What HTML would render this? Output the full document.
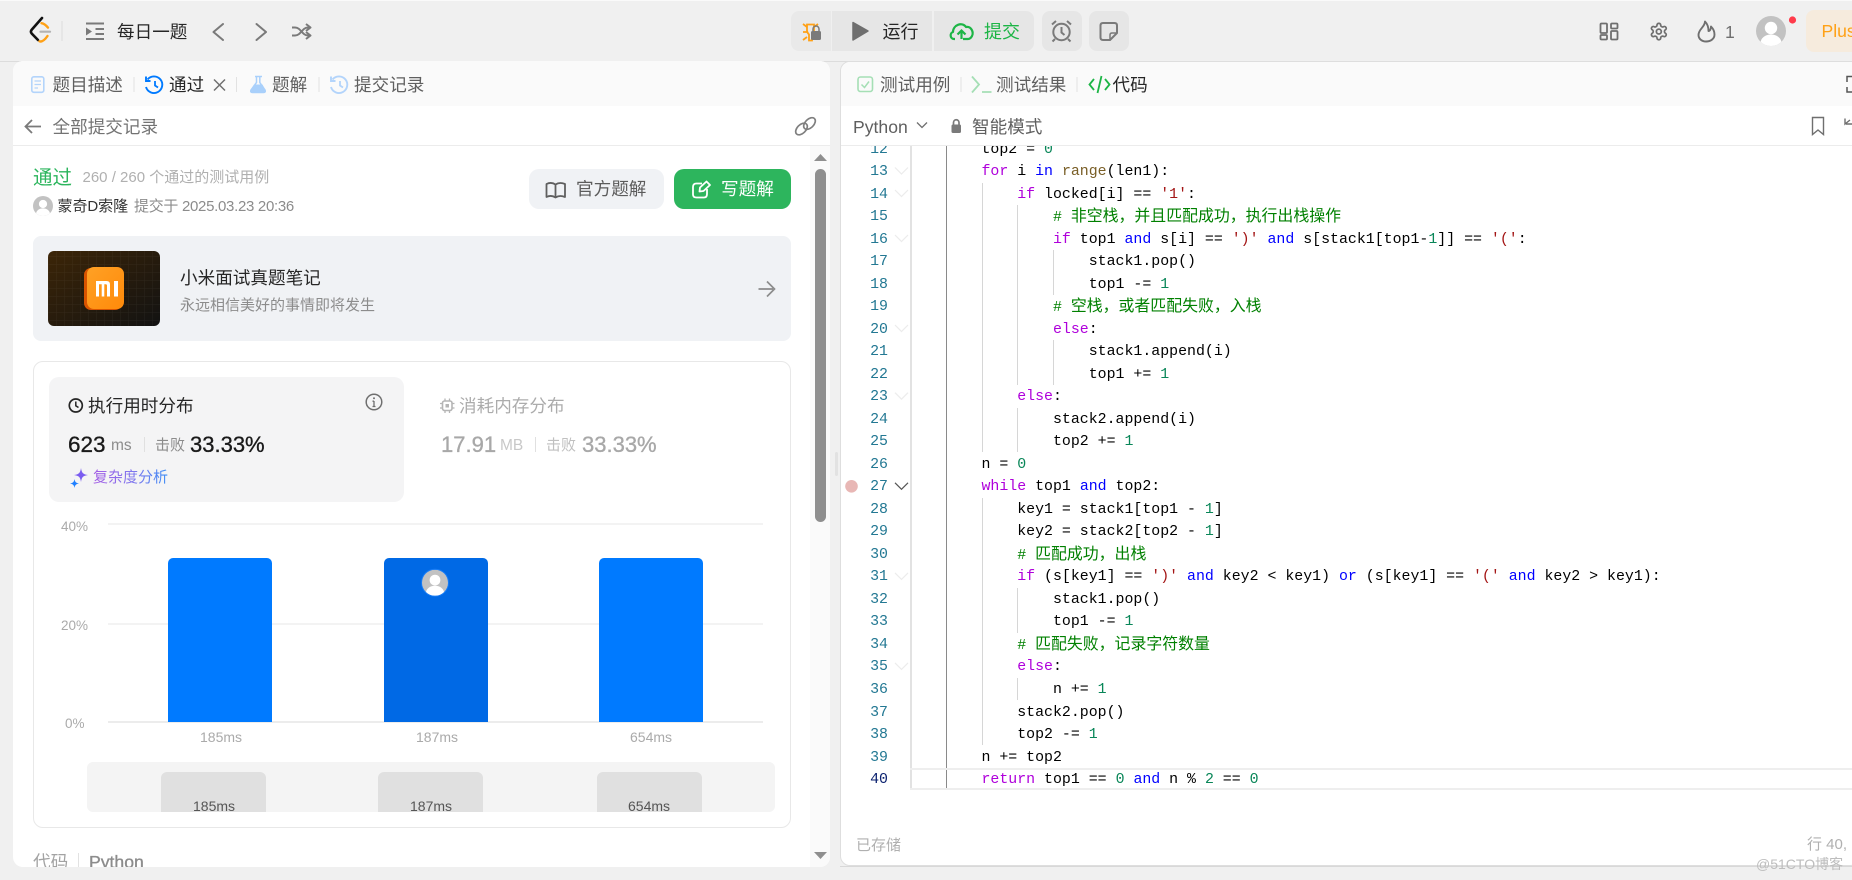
<!DOCTYPE html>
<html lang="zh"><head><meta charset="utf-8"><title>每日一题</title>
<style>
html,body{margin:0;padding:0}
body{width:1852px;height:880px;overflow:hidden;background:#f0f0f0;position:relative;font-family:"Liberation Sans","Noto Sans CJK SC",sans-serif;color:#262626}
.a{position:absolute}
.t{position:absolute;white-space:nowrap;line-height:20px;height:20px}
.g{color:#5f5f5f}
.f{font-size:17.6px}
.m{font-size:15px}
.d{position:absolute;background:#e2e2e2;width:1px}
.mono{font-family:"Liberation Mono","Noto Sans CJK SC",monospace;font-size:14.9px}
.l{height:22.52px;line-height:22.52px;white-space:pre;color:#000}
.k{color:#af00db}.b{color:#0000ff}.n{color:#098658}.s{color:#a31515}.c{color:#008000}.r{color:#795e26}
.c i{font-style:normal;font-size:15.9px}
.gu{position:absolute;width:1px;background:#d6d6d6}
.st{-webkit-text-stroke:.35px currentColor}
svg{position:absolute;left:0;top:0}
</style></head><body>
<div class="a" style="left:0;top:0;width:1852px;height:1px;background:#fafafa"></div>
<div class="a" style="left:0;top:61px;width:1852px;height:1px;background:#dcdcdc"></div>

<!-- left panel -->
<div class="a" style="left:13px;top:61px;width:817px;height:806px;background:#fff;border-radius:10px;overflow:hidden">
  <div class="a" style="left:0;top:0;width:817px;height:45px;background:#fafafa"></div>
  <div class="a" style="left:0;top:84px;width:817px;height:1px;background:#ececec"></div>
  <div class="a" style="left:797px;top:85px;width:20px;height:721px;background:#fafafa"></div>
</div>
<!-- right panel -->
<div class="a" style="left:840px;top:61px;width:1020px;height:805px;background:#fff;border:1px solid #dedede;box-sizing:border-box;border-radius:10px;overflow:hidden">
  <div class="a" style="left:0;top:0;width:1020px;height:44px;background:#fafafa"></div>
  <div class="a" style="left:0;top:83px;width:1020px;height:1px;background:#ececec"></div>
</div>
<!-- top buttons -->
<div class="a" style="left:791px;top:11px;width:40px;height:40px;background:#e9e9e9;border-radius:8px 0 0 8px"></div>
<div class="a" style="left:832px;top:11px;width:100px;height:40px;background:#e6e6e6"></div>
<div class="a" style="left:934px;top:11px;width:100px;height:40px;background:#e6e6e6;border-radius:0 8px 8px 0"></div>
<div class="a" style="left:1042px;top:11px;width:40px;height:40px;background:#e6e6e6;border-radius:8px"></div>
<div class="a" style="left:1089px;top:11px;width:40px;height:40px;background:#e6e6e6;border-radius:8px"></div>
<div class="a" style="left:1806px;top:10px;width:46px;height:42px;background:#f6ebdd;border-radius:8px 0 0 8px"></div>

<!-- left content boxes -->
<div class="a" style="left:529px;top:169px;width:135px;height:40px;background:#f0f2f5;border-radius:10px"></div>
<div class="a" style="left:674px;top:169px;width:117px;height:40px;background:#2db55d;border-radius:10px"></div>
<div class="a" style="left:33px;top:236px;width:758px;height:105px;background:#f0f2f5;border-radius:8px"></div>
<div class="a" style="left:33px;top:361px;width:758px;height:467px;box-sizing:border-box;border:1px solid #e8e8e8;border-radius:10px"></div>
<div class="a" style="left:49px;top:377px;width:355px;height:125px;background:#f4f4f5;border-radius:10px"></div>
<!-- chart -->
<div class="a" style="left:108px;top:523px;width:655px;height:2px;background:#f3f3f3"></div>
<div class="a" style="left:108px;top:623px;width:655px;height:2px;background:#f3f3f3"></div>
<div class="a" style="left:108px;top:721px;width:655px;height:2px;background:#ececec"></div>
<div class="a" style="left:168px;top:558px;width:104px;height:164px;background:#007aff;border-radius:5px 5px 0 0"></div>
<div class="a" style="left:384px;top:558px;width:104px;height:164px;background:#0069e5;border-radius:5px 5px 0 0"></div>
<div class="a" style="left:599px;top:558px;width:104px;height:164px;background:#007aff;border-radius:5px 5px 0 0"></div>
<div class="a" style="left:87px;top:762px;width:688px;height:50px;background:#f4f4f4;border-radius:6px;overflow:hidden">
  <div class="a" style="left:74px;top:10px;width:105px;height:40px;background:#e0e0e0;border-radius:6px 6px 0 0"></div>
  <div class="a" style="left:291px;top:10px;width:105px;height:40px;background:#e0e0e0;border-radius:6px 6px 0 0"></div>
  <div class="a" style="left:510px;top:10px;width:105px;height:40px;background:#e0e0e0;border-radius:6px 6px 0 0"></div>
  <div class="t" style="left:106px;top:34px;font-size:14px;color:#555">185ms</div>
  <div class="t" style="left:323px;top:34px;font-size:14px;color:#555">187ms</div>
  <div class="t" style="left:541px;top:34px;font-size:14px;color:#555">654ms</div>
</div>
<!-- scrollbar -->
<div class="a" style="left:815px;top:169px;width:11px;height:353px;background:#8f8f8f;border-radius:6px"></div>
<div class="a" style="left:835px;top:452px;width:3px;height:24px;background:#e2e2e2;border-radius:2px"></div>

<!-- code -->
<div class="a" style="left:910px;top:146px;width:2px;height:644px;background:#e2e2e2"></div>
<div class="a" style="left:946px;top:146px;width:1px;height:644px;background:#8a8a8a"></div>
<div class="a" style="left:910px;top:768px;width:942px;height:2px;background:#eee"></div>
<div class="a" style="left:910px;top:788px;width:942px;height:2px;background:#eee"></div>
<div class="gu" style="left:982px;top:183px;height:269px"></div>
<div class="gu" style="left:982px;top:498px;height:247px"></div>
<div class="gu" style="left:1017px;top:205px;height:180px"></div>
<div class="gu" style="left:1017px;top:408px;height:44px"></div>
<div class="gu" style="left:1017px;top:588px;height:45px"></div>
<div class="gu" style="left:1017px;top:678px;height:22px"></div>
<div class="gu" style="left:1053px;top:250px;height:45px"></div>
<div class="gu" style="left:1053px;top:340px;height:45px"></div>

<div class="a mono" style="left:850px;top:146px;width:38px;height:644px;overflow:hidden;text-align:right;color:#237893">
<div style="margin-top:-7.4px">
<div class="l" style="color:#237893">12</div><div class="l" style="color:#237893">13</div><div class="l" style="color:#237893">14</div><div class="l" style="color:#237893">15</div><div class="l" style="color:#237893">16</div><div class="l" style="color:#237893">17</div><div class="l" style="color:#237893">18</div><div class="l" style="color:#237893">19</div><div class="l" style="color:#237893">20</div><div class="l" style="color:#237893">21</div><div class="l" style="color:#237893">22</div><div class="l" style="color:#237893">23</div><div class="l" style="color:#237893">24</div><div class="l" style="color:#237893">25</div><div class="l" style="color:#237893">26</div><div class="l" style="color:#237893">27</div><div class="l" style="color:#237893">28</div><div class="l" style="color:#237893">29</div><div class="l" style="color:#237893">30</div><div class="l" style="color:#237893">31</div><div class="l" style="color:#237893">32</div><div class="l" style="color:#237893">33</div><div class="l" style="color:#237893">34</div><div class="l" style="color:#237893">35</div><div class="l" style="color:#237893">36</div><div class="l" style="color:#237893">37</div><div class="l" style="color:#237893">38</div><div class="l" style="color:#237893">39</div><div class="l" style="color:#0b216f">40</div>
</div></div>

<div class="a mono" style="left:910px;top:146px;width:942px;height:644px;overflow:hidden">
<div style="margin-top:-7.4px">
<div class="l">        top2 = <span class="n">0</span></div>
<div class="l">        <span class="k">for</span> i <span class="b">in</span> <span class="r">range</span>(len1):</div>
<div class="l">            <span class="k">if</span> locked[i] == <span class="s">'1'</span>:</div>
<div class="l">                <span class="c"># <i>非空栈，并且匹配成功，执行出栈操作</i></span></div>
<div class="l">                <span class="k">if</span> top1 <span class="b">and</span> s[i] == <span class="s">')'</span> <span class="b">and</span> s[stack1[top1-<span class="n">1</span>]] == <span class="s">'('</span>:</div>
<div class="l">                    stack1.pop()</div>
<div class="l">                    top1 -= <span class="n">1</span></div>
<div class="l">                <span class="c"># <i>空栈，或者匹配失败，入栈</i></span></div>
<div class="l">                <span class="k">else</span>:</div>
<div class="l">                    stack1.append(i)</div>
<div class="l">                    top1 += <span class="n">1</span></div>
<div class="l">            <span class="k">else</span>:</div>
<div class="l">                stack2.append(i)</div>
<div class="l">                top2 += <span class="n">1</span></div>
<div class="l">        n = <span class="n">0</span></div>
<div class="l">        <span class="k">while</span> top1 <span class="b">and</span> top2:</div>
<div class="l">            key1 = stack1[top1 - <span class="n">1</span>]</div>
<div class="l">            key2 = stack2[top2 - <span class="n">1</span>]</div>
<div class="l">            <span class="c"># <i>匹配成功，出栈</i></span></div>
<div class="l">            <span class="k">if</span> (s[key1] == <span class="s">')'</span> <span class="b">and</span> key2 &lt; key1) <span class="b">or</span> (s[key1] == <span class="s">'('</span> <span class="b">and</span> key2 &gt; key1):</div>
<div class="l">                stack1.pop()</div>
<div class="l">                top1 -= <span class="n">1</span></div>
<div class="l">            <span class="c"># <i>匹配失败，记录字符数量</i></span></div>
<div class="l">            <span class="k">else</span>:</div>
<div class="l">                n += <span class="n">1</span></div>
<div class="l">            stack2.pop()</div>
<div class="l">            top2 -= <span class="n">1</span></div>
<div class="l">        n += top2</div>
<div class="l">        <span class="k">return</span> top1 == <span class="n">0</span> <span class="b">and</span> n % <span class="n">2</span> == <span class="n">0</span></div>
</div></div>

<!-- icons -->
<svg width="1852" height="880" viewBox="0 0 1852 880" fill="none">
<defs>
<linearGradient id="gi" x1="0" y1="0" x2="1" y2="1"><stop offset="0" stop-color="#3c2507"/><stop offset="1" stop-color="#121212"/></linearGradient>
<linearGradient id="go" x1="0" y1="0" x2="1" y2="1"><stop offset="0" stop-color="#ffa125"/><stop offset="1" stop-color="#ff8a0a"/></linearGradient>
<pattern id="pg" width="8" height="8" patternUnits="userSpaceOnUse"><path d="M8 0H0V8" stroke="#fff" stroke-opacity=".06"/></pattern>
<clipPath id="cb"><circle cx="15" cy="15" r="15"/></clipPath>
<symbol id="av" viewBox="0 0 30 30"><g clip-path="url(#cb)"><rect width="30" height="30" fill="#c2c2c2"/><circle cx="15" cy="12" r="6.2" fill="#fff"/><ellipse cx="15" cy="27" rx="10.5" ry="8.5" fill="#fff"/></g></symbol>
</defs>

<!-- logo -->
<path d="M42 18 31.8 29.6Q30 31.6 31.8 33.6L38 40" stroke="#111" stroke-width="2.6" stroke-linecap="round"/>
<path d="M41.500 23.200Q44.500 23.500 48 27.600M39.500 41.300Q43 42.500 47.500 36" stroke="#ffa116" stroke-width="2.400" stroke-linecap="round"/>
<path d="M40.500 31.700H50" stroke="#b3b3b3" stroke-width="2.200" stroke-linecap="round"/>
<path d="M62 21V41" stroke="#dcdcdc"/>
<path d="M86 23.500H104M95.500 29H104M95.500 34H104M86 39H104" stroke="#7a7a7a" stroke-width="2"/>
<path d="M86 27.500 92 31.500 86 35.500Z" fill="#7a7a7a"/>
<path d="M223 24 213.500 32 223 40M256.500 24 266 32 256.500 40" stroke="#7a7a7a" stroke-width="2" stroke-linejoin="round" stroke-linecap="round"/>
<path d="M292 27.500H295C301 27.500 302 35.500 308 35.500H310M292 35.500H295C301 35.500 302 27.500 308 27.500H310M306 24 310.500 27.500 306 31M306 32 310.500 35.500 306 39" stroke="#7a7a7a" stroke-width="2" stroke-linejoin="round"/>

<!-- center top -->
<g stroke="#ffa116" stroke-width="1.800"><path d="M807 24.500h7v6c0 2-1 3-2 4v6h-3v-6c-1-1-2-3-2-4z"/><path d="M803 24l4 3M818 24l-4 3M803 32h4M803 40l4-3"/></g>
<rect x="811" y="31" width="10" height="9" rx="1.500" fill="#7a7a7a"/><path d="M813 31v-2a3 3 0 0 1 6 0v2" stroke="#7a7a7a" stroke-width="1.500"/>
<path d="M853 22.500 868 31 853 40Z" fill="#6f6f6f" stroke="#6f6f6f" stroke-width="1.500" stroke-linejoin="round"/>
<path d="M955 39H954C950 39 949.500 33 953 32C953 25 962 21.500 966 27C971 26 974 32 972 36C971 38 970 39 968 39H963" stroke="#1db546" stroke-width="2.200" stroke-linejoin="round"/>
<path d="M961.500 39V31M957.500 34.500 961.500 30.500 965.500 34.500" stroke="#1db546" stroke-width="2.200"/>
<circle cx="1061.500" cy="32" r="8.200" stroke="#7a7a7a" stroke-width="2"/><path d="M1061.500 27V32.500L1064.500 35M1052 24.500l4-3.500M1071 24.500l-4-3.500M1055 39l-2.500 2.500M1068 39l2.500 2.500" stroke="#7a7a7a" stroke-width="2"/>
<path d="M1117 33V25.500Q1117 23 1114.500 23H1103Q1100.500 23 1100.500 25.500V37.500Q1100.500 40 1103 40H1110Z" stroke="#7a7a7a" stroke-width="2" stroke-linejoin="round"/><path d="M1117 33H1112Q1110 33 1110 35V40" stroke="#7a7a7a" stroke-width="1.500"/>

<!-- right top -->
<g stroke="#6f6f6f" stroke-width="1.800"><rect x="1600.500" y="23.500" width="6.500" height="9.500" rx="1"/><rect x="1611" y="23.500" width="6.500" height="5" rx="1"/><rect x="1600.500" y="35" width="6.500" height="4.500" rx="1"/><rect x="1611" y="31" width="6.500" height="8.500" rx="1"/></g>
<g transform="translate(1649 21.700) scale(.82)" stroke="#6f6f6f" stroke-width="2.100" stroke-linejoin="round"><path d="M12.220 2h-.44a2 2 0 0 0-2 2v.18a2 2 0 0 1-1 1.730l-.43.25a2 2 0 0 1-2 0l-.15-.08a2 2 0 0 0-2.730.73l-.22.38a2 2 0 0 0 .73 2.730l.15.1a2 2 0 0 1 1 1.720v.51a2 2 0 0 1-1 1.740l-.15.09a2 2 0 0 0-.73 2.730l.22.38a2 2 0 0 0 2.730.73l.15-.08a2 2 0 0 1 2 0l.43.25a2 2 0 0 1 1 1.730V20a2 2 0 0 0 2 2h.44a2 2 0 0 0 2-2v-.18a2 2 0 0 1 1-1.730l.43-.25a2 2 0 0 1 2 0l.15.08a2 2 0 0 0 2.730-.73l.22-.39a2 2 0 0 0-.73-2.730l-.15-.08a2 2 0 0 1-1-1.740v-.5a2 2 0 0 1 1-1.740l.15-.09a2 2 0 0 0 .73-2.730l-.22-.38a2 2 0 0 0-2.730-.73l-.15.08a2 2 0 0 1-2 0l-.43-.25a2 2 0 0 1-1-1.730V4a2 2 0 0 0-2-2z"/><circle cx="12" cy="12" r="3"/></g>
<path d="M1705 21.500C1705 27 1698.500 29 1698.500 35C1698.500 39 1702 41.500 1706 41.500C1710.500 41.500 1714.500 39 1714.500 34.500C1714.500 31 1712.500 28 1711 26.500C1711 29 1710 31 1708.500 31C1708.500 27 1707.500 24 1705 21.500Z" stroke="#6f6f6f" stroke-width="1.900" stroke-linejoin="round"/>
<svg x="1756" y="16" width="30" height="30"><use href="#av"/></svg>
<circle cx="1792.500" cy="20" r="3.600" fill="#ff3b4b"/>

<!-- tab icons -->
<rect x="31.800" y="76.800" width="12" height="15.500" rx="2" stroke="#b3d4fb" stroke-width="1.600"/><path d="M34.500 81H41M34.500 84.500H41M34.500 88H38" stroke="#b3d4fb" stroke-width="1.300"/>
<path d="M147.500 79.500A8.300 8.300 0 1 1 146 87" stroke="#007aff" stroke-width="1.900"/><path d="M146 76.500V81H150.500" stroke="#007aff" stroke-width="1.900"/><path d="M155 81V85.500L158 87.500" stroke="#007aff" stroke-width="1.800"/>
<path d="M214 79.500 225 90.500M225 79.500 214 90.500" stroke="#707070" stroke-width="1.500"/>
<path d="M255 76.500H262M256.500 76.500V82.500L251 90Q250 92.500 252.500 92.500H263.500Q266 92.500 265 90L259.800 82.500V76.500" stroke="#a9d0fb" stroke-width="1.500"/><path d="M254 84.500H262.500L265.500 90.500Q266 92.500 263.500 92.500H252.500Q250 92.500 250.800 90.500Z" fill="#a9d0fb"/>
<path d="M332.500 79.500A8.300 8.300 0 1 1 331 87" stroke="#b3d4fb" stroke-width="1.900"/><path d="M331 76.500V81H335.500" stroke="#b3d4fb" stroke-width="1.900"/><path d="M340 81V85.500L343 87.500" stroke="#b3d4fb" stroke-width="1.800"/>
<path d="M134 77V92M236.500 77V92M319 77V92M961 77V92M1077 77V92" stroke="#e2e2e2"/>

<rect x="858" y="77" width="14.500" height="14.500" rx="2.500" stroke="#a5dfb5" stroke-width="1.600"/><path d="M861.500 84.500 864.500 87.500 869 81.500" stroke="#a5dfb5" stroke-width="1.500"/>
<path d="M972 76.500 979 84.500 972 92.500M982 92H991.500" stroke="#a5dfb5" stroke-width="1.800"/>
<path d="M1094 79 1089.500 84.500 1094 90M1105 79 1109.500 84.500 1105 90" stroke="#1db546" stroke-width="1.800"/><path d="M1101.500 76 1097.500 93" stroke="#1db546" stroke-width="1.800"/>
<path d="M41 126.500H25.500M32 120 25.500 126.500 32 133" stroke="#7a7a7a" stroke-width="1.800"/>
<g stroke="#7f7f7f" stroke-width="1.700"><ellipse cx="801.500" cy="129" rx="7" ry="4.300" transform="rotate(-45 801.500 129)"/><ellipse cx="809.500" cy="123.500" rx="7" ry="4.300" transform="rotate(-45 809.500 123.500)"/></g>
<path d="M917 122.500 922 127.500 927 122.500" stroke="#6f6f6f" stroke-width="1.300"/>
<rect x="951.500" y="124.500" width="9.500" height="8.500" rx="1.500" fill="#7a7a7a"/><path d="M953.500 125V122.500A2.700 2.700 0 0 1 959 122.500V125" stroke="#7a7a7a" stroke-width="1.700"/>
<path d="M1812.500 117.500H1823.500V134.500L1818 130 1812.500 134.500Z" stroke="#6f6f6f" stroke-width="1.400"/>
<path d="M1847 82V76.500H1852M1847 87V92H1852" stroke="#555" stroke-width="1.500"/>
<path d="M1850 120 1845 124V118.500M1846 124 1852 124" stroke="#6f6f6f" stroke-width="1.400"/>

<!-- submission -->
<svg x="33" y="196" width="20" height="20"><use href="#av"/></svg>
<path d="M555.500 184.500C552.500 182.500 549.500 182.500 546.500 184V197C549.500 195.500 552.500 195.500 555.500 197.500 558.500 195.500 561.500 195.500 565 197V184C561.500 182.500 558.500 182.500 555.500 184.500ZM555.500 184.500V197" stroke="#5f5f5f" stroke-width="1.800" stroke-linejoin="round"/>
<path d="M702 183.500H696.500Q693 183.500 693 187V194.500Q693 197.500 696.500 197.500H704Q707 197.500 707 194V189" stroke="#fff" stroke-width="1.800"/><path d="M699.500 191.500 700 187.500 706.500 181.500 710 185 703.500 191Z" stroke="#fff" stroke-width="1.800" stroke-linejoin="round"/>

<!-- banner -->
<rect x="48" y="251" width="112" height="75" rx="6" fill="url(#gi)"/><rect x="48" y="251" width="112" height="75" rx="6" fill="url(#pg)"/>
<rect x="84" y="268" width="38" height="42" rx="7" fill="#d95400"/>
<rect x="87" y="267" width="37" height="42" rx="7" fill="url(#go)"/>
<path d="M96 281H106.500Q110 281 110 284.500V296.500H107V285.500Q107 284.200 105.800 284.200H104.300V296.500H101.700V284.200H99V296.500H96ZM114 281H118V296.500H114Z" fill="#fff"/>
<path d="M773 289H758.500M767 281.500 774.500 289 767 296.500" stroke="#8c8c8c" stroke-width="1.700"/>

<!-- stats -->
<circle cx="75.800" cy="405.500" r="6.500" stroke="#262626" stroke-width="1.700"/><path d="M75.800 401.500V405.800L78.500 407.500" stroke="#262626" stroke-width="1.500"/>
<circle cx="374" cy="402" r="7.800" stroke="#6f6f6f" stroke-width="1.500"/><path d="M374 401V406.500M372.500 401.200H374M372.500 406.500H375.500" stroke="#6f6f6f" stroke-width="1.300"/><circle cx="374" cy="398.200" r="1" fill="#6f6f6f"/>
<path d="M81 468C81.800 473 83 474.300 88 475 83 475.800 81.800 477 81 482 80.200 477 79 475.800 74 475 79 474.300 80.200 473 81 468Z" fill="#7a5cf0"/>
<path d="M74.500 479C75 482 76 483 79 483.500 76 484 75 485 74.500 488 74 485 73 484 70 483.500 73 483 74 482 74.500 479Z" fill="#2080ff"/>
<rect x="442.500" y="401" width="9.500" height="9.500" rx="2" stroke="#b5b5b5" stroke-width="1.600"/><rect x="445.500" y="404" width="3.500" height="3.500" fill="#b5b5b5"/>
<path d="M445 398.500V400.500M449.500 398.500V400.500M445 411V413M449.500 411V413M440 403.500H442M440 408H442M452.500 403.500H454.500M452.500 408H454.500" stroke="#b5b5b5" stroke-width="1.300"/>
<path d="M144.500 437V452M535.500 437V452" stroke="#e0e0e0"/>
<circle cx="435" cy="582.700" r="14" fill="#1f85ff" fill-opacity=".7"/>
<svg x="422" y="569.700" width="26" height="26"><use href="#av"/></svg>

<!-- scroll arrows -->
<path d="M814 161 820.500 154 827 161Z" fill="#8f8f8f"/><path d="M814 852 820.500 859 827 852Z" fill="#8f8f8f"/>
<!-- folding -->
<g stroke="#ececec" stroke-width="1.200"><path d="M895 167.500 901.500 174 908 167.500M895 190 901.500 196.500 908 190M895 235 901.500 241.500 908 235M895 325 901.500 331.500 908 325M895 392.700 901.500 399.200 908 392.700M895 572.900 901.500 579.400 908 572.900M895 662.900 901.500 669.400 908 662.900"/></g>
<path d="M895 482.800 901.500 489.300 908 482.800" stroke="#555" stroke-width="1.200"/>
<circle cx="851.500" cy="486.300" r="6.300" fill="#e8b7b5"/>
</svg>

<!-- header text -->
<div class="t f" style="left:117px;top:22px">每日一题</div>
<div class="t f" style="left:882.500px;top:22px;font-size:18px">运行</div>
<div class="t f" style="left:984px;top:22px;font-size:18px;color:#1db546">提交</div>
<div class="t" style="left:1725px;top:22px;font-size:17.600px;color:#6f6f6f">1</div>
<div class="t f" style="left:1821.500px;top:21px;color:#ffa116">Plus</div>

<!-- tabs -->
<div class="t f g" style="left:52.500px;top:75px">题目描述</div>
<div class="t f" style="left:169px;top:75px">通过</div>
<div class="t f g" style="left:272px;top:75px">题解</div>
<div class="t f g" style="left:354px;top:75px">提交记录</div>
<div class="t f g" style="left:880px;top:75px">测试用例</div>
<div class="t f g" style="left:996px;top:75px">测试结果</div>
<div class="t f" style="left:1112.500px;top:75px">代码</div>
<div class="t f" style="left:52.500px;top:117px;color:#737373">全部提交记录</div>
<div class="t f g" style="left:853px;top:117px">Python</div>
<div class="t f g" style="left:972px;top:117px">智能模式</div>

<!-- submission text -->
<div class="t" style="left:33px;top:168px;font-size:19.500px;color:#2cb55d">通过</div>
<div class="t m" style="left:82.500px;top:167.500px;color:#b0b0b0">260 / 260 个通过的测试用例</div>
<div class="t m" style="left:57.500px;top:196.500px;color:#333;letter-spacing:-.05px">蒙奇D索隆</div>
<div class="t m" style="left:134px;top:196.500px;color:#8c8c8c;letter-spacing:-.3px">提交于 2025.03.23 20:36</div>
<div class="t f" style="left:576px;top:179px;color:#5c5c5c">官方题解</div>
<div class="t f" style="left:721px;top:179px;color:#fff">写题解</div>
<div class="t f" style="left:180px;top:268px">小米面试真题笔记</div>
<div class="t m" style="left:180px;top:295.500px;color:#8c8c8c">永远相信美好的事情即将发生</div>

<div class="t f" style="left:88px;top:395.500px">执行用时分布</div>
<div class="t st" style="left:68px;top:435px;font-size:22.500px;color:#1a1a1a">623</div>
<div class="t" style="left:111px;top:436px;font-size:15.500px;color:#8c8c8c">ms</div>
<div class="t m" style="left:155px;top:436px;color:#8c8c8c">击败</div>
<div class="t st" style="left:190px;top:435px;font-size:22px;color:#1a1a1a">33.33%</div>
<div class="t m" style="left:93px;top:468px;color:transparent;background:linear-gradient(90deg,#a55ee5,#7f78ee 55%,#3b8cf5);-webkit-background-clip:text;background-clip:text">复杂度分析</div>

<div class="t f" style="left:459px;top:395.500px;color:#acacac">消耗内存分布</div>
<div class="t st" style="left:441px;top:435px;font-size:22px;color:#a8a8a8">17.91</div>
<div class="t" style="left:500px;top:436px;font-size:15.500px;color:#c8c8c8">MB</div>
<div class="t m" style="left:546px;top:436px;color:#c0c0c0">击败</div>
<div class="t st" style="left:582px;top:435px;font-size:22px;color:#a8a8a8">33.33%</div>

<div class="t" style="left:61px;top:517px;font-size:13.500px;color:#aaa">40%</div>
<div class="t" style="left:61px;top:616px;font-size:13.500px;color:#aaa">20%</div>
<div class="t" style="left:65px;top:714px;font-size:13.500px;color:#aaa">0%</div>
<div class="t" style="left:200px;top:727px;font-size:14px;color:#aaa">185ms</div>
<div class="t" style="left:416px;top:727px;font-size:14px;color:#aaa">187ms</div>
<div class="t" style="left:630px;top:727px;font-size:14px;color:#aaa">654ms</div>

<div class="a" style="left:13px;top:845px;width:797px;height:22px;overflow:hidden">
  <div class="t f" style="left:20px;top:7px;color:#a3a3a3">代码</div>
  <div class="t f st" style="left:76px;top:7px;color:#8c8c8c">Python</div>
  <div class="d" style="left:65px;top:8px;height:14px"></div>
</div>

<!-- footer -->
<div class="t m" style="left:856px;top:836px;color:#b0b0b0">已存储</div>
<div class="t m" style="left:1807px;top:835px;color:#b0b0b0">行 40,</div>
<div class="a" style="left:840px;top:866px;width:1012px;height:1px;background:#d8d8d8"></div>
<div class="t" style="left:1756px;top:854px;font-size:14px;color:#bdbdbd">@51CTO博客</div>
</body></html>
